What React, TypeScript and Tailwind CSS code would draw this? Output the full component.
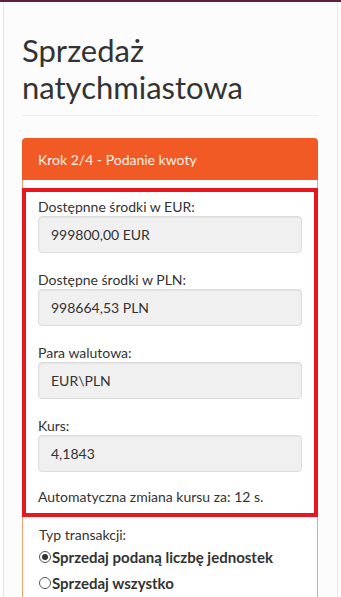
import React from "react";

const fields = [
  { label: "Dostępnne środki w EUR:", value: "999800,00 EUR" },
  { label: "Dostępne środki w PLN:", value: "998664,53 PLN" },
  { label: "Para walutowa:", value: "EUR\\PLN" },
  { label: "Kurs:", value: "4,1843" },
];

function Radio({ checked }: { checked?: boolean }) {
  return (
    <span className="mr-[1px] inline-flex h-[12px] w-[12px] shrink-0 items-center justify-center rounded-full border border-[#555] bg-white">
      {checked && <span className="h-[6px] w-[6px] rounded-full bg-[#333]" />}
    </span>
  );
}

export default function App() {
  return (
    <div
      className="min-h-screen bg-white text-[#333]"
      style={{ fontFamily: "Lato, 'Noto Sans', 'Liberation Sans', sans-serif" }}
    >
      <div className="h-[2px] bg-[#5b2140]" />
      <div className="mx-[3px] min-h-[595px] border-x border-[#e6e6e6] bg-[#fcfcfc] pl-[18px] pr-[19px] pt-[30px]">
        <h1 className="text-[31px] font-normal leading-[37px] text-[#333]">
          Sprzedaż
          <br />
          natychmiastowa
        </h1>
        <div className="mt-[9px] h-px bg-[#eeeeee]" />

        <div className="mt-[22px]">
          <div className="flex h-[42px] items-center rounded-t-[4px] bg-[#f15a24] px-4 text-[14px] text-[#fff2e8]">
            Krok 2/4 - Podanie kwoty
          </div>
          <div className="border-x border-[#f2a070] bg-white pt-[8px]">
            <div className="-mx-px border-4 border-[#e8171f] px-3 pb-[7px] pt-[6px]">
              {fields.map((f, i) => (
                <div key={f.label} className={i > 0 ? "mt-[18px]" : ""}>
                  <div className="text-[14px] leading-[18px]">{f.label}</div>
                  <div className="flex h-[37px] items-center rounded-[4px] border border-[#dcdcdc] bg-[#f0f0f0] px-3 text-[14px] shadow-[inset_0_1px_1px_rgba(0,0,0,0.05)]">
                    {f.value}
                  </div>
                </div>
              ))}
              <div className="mt-[16px] text-[14px] leading-[18px]">
                Automatyczna zmiana kursu za: 12 s.
              </div>
            </div>
            <div className="px-4 pb-4 pt-[9px]">
              <div className="text-[14px] leading-[18px]">Typ transakcji:</div>
              <label className="mt-[4px] flex h-[18px] items-center text-[15px] font-bold">
                <Radio checked />
                Sprzedaj podaną liczbę jednostek
              </label>
              <label className="mt-[8px] flex h-[18px] items-center text-[15px] font-bold">
                <Radio />
                Sprzedaj wszystko
              </label>
            </div>
          </div>
        </div>
      </div>
    </div>
  );
}
